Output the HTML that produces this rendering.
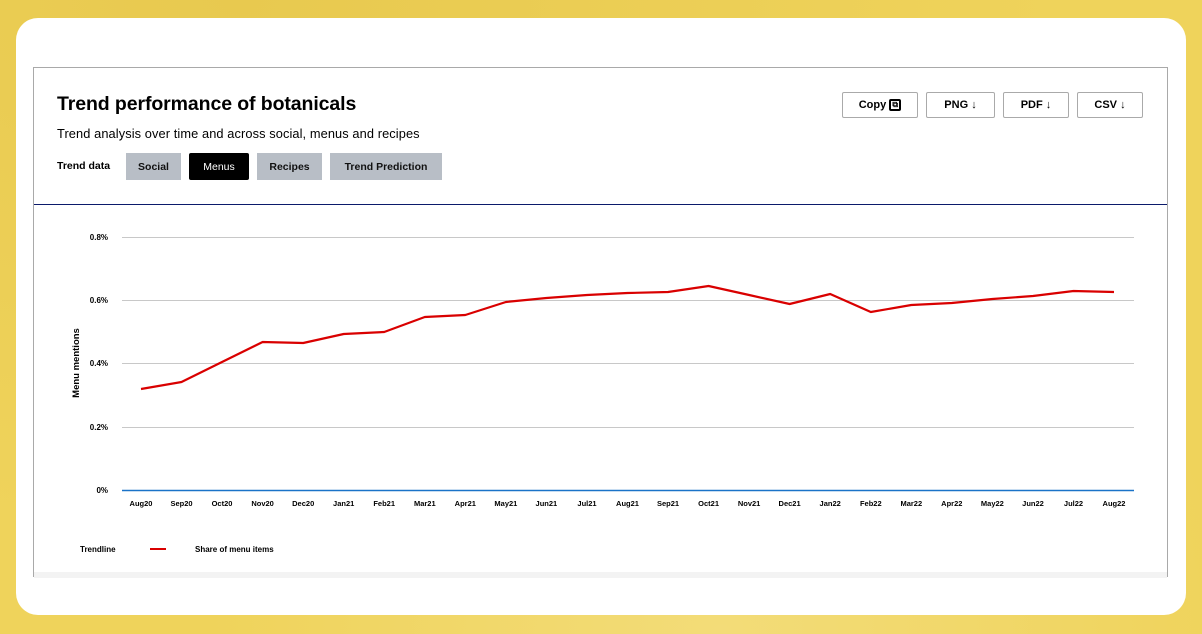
<!DOCTYPE html>
<html><head><meta charset="utf-8"><style>
*{margin:0;padding:0;box-sizing:border-box}
body{width:1202px;height:634px;overflow:hidden;background:#efd25a;font-family:"Liberation Sans",sans-serif;position:relative}
.bg{position:absolute;inset:0;background:radial-gradient(ellipse at 20% 0%,#e8c94f,transparent 60%),radial-gradient(ellipse at 60% 100%,#f3dc78,transparent 50%),#efd35b}
.card{position:absolute;left:16px;top:18px;width:1170px;height:597px;background:#fff;border-radius:22px}
.panel{position:absolute;left:33px;top:67px;width:1135px;height:510px;border:1px solid #a9a9a9;border-bottom:none;background:#fff}
.foot{position:absolute;left:34px;top:572px;width:1133px;height:6px;background:#f3f3f3}
h1{position:absolute;left:57px;top:93px;font-size:19.5px;font-weight:bold;color:#000;letter-spacing:-0.1px}
.sub{position:absolute;left:57px;top:126px;font-size:12.8px;color:#000;letter-spacing:0.1px}
.td{position:absolute;left:57px;top:160px;font-size:10.5px;font-weight:bold}
.tab{position:absolute;top:153px;height:27px;background:#b8bec6;font-size:10.5px;font-weight:bold;display:flex;align-items:center;justify-content:center;color:#111}
.btn{position:absolute;top:92px;height:26px;border:1px solid #aaa;border-radius:2px;font-size:11px;font-weight:bold;display:flex;align-items:center;justify-content:center;background:#fff}
.line{position:absolute;left:34px;top:204px;width:1133px;height:1px;background:#0b1a6b}
</style></head><body>
<div class="bg"></div>
<div class="card"></div>
<div class="panel"></div>
<div class="foot"></div>
<h1>Trend performance of botanicals</h1>
<div class="sub">Trend analysis over time and across social, menus and recipes</div>
<div class="td">Trend data</div>
<div class="tab" style="left:126px;width:55px">Social</div>
<div class="tab" style="left:189px;width:60px;background:#000;color:#fff;font-weight:normal;border-radius:2px">Menus</div>
<div class="tab" style="left:257px;width:65px">Recipes</div>
<div class="tab" style="left:330px;width:112px">Trend Prediction</div>
<div class="btn" style="left:842px;width:76px">Copy&nbsp;<span style="display:inline-block;width:12px;height:12px;border:2px solid #000;border-radius:2px;font-size:8px;line-height:8px;text-align:center">⧉</span></div>
<div class="btn" style="left:926px;width:69px">PNG&nbsp;↓</div>
<div class="btn" style="left:1003px;width:66px">PDF&nbsp;↓</div>
<div class="btn" style="left:1077px;width:66px">CSV&nbsp;↓</div>
<div class="line"></div>
<svg style="position:absolute;left:0;top:0" width="1202" height="634" font-family="Liberation Sans,sans-serif" font-weight="bold" font-size="8">
<g stroke="#c8c8c8" stroke-width="1">
<line x1="122" y1="237.5" x2="1134" y2="237.5"/><line x1="122" y1="300.5" x2="1134" y2="300.5"/><line x1="122" y1="363.5" x2="1134" y2="363.5"/><line x1="122" y1="427.5" x2="1134" y2="427.5"/>
</g>
<line x1="122" y1="490.5" x2="1134" y2="490.5" stroke="#1a73c8" stroke-width="1.5"/>
<g text-anchor="end"><text x="108" y="240">0.8%</text><text x="108" y="303">0.6%</text><text x="108" y="366">0.4%</text><text x="108" y="430">0.2%</text><text x="108" y="493">0%</text></g>
<text transform="translate(79,363) rotate(-90)" text-anchor="middle" font-size="9.5">Menu mentions</text>
<g text-anchor="middle" font-size="7.5">
<text x="141" y="506">Aug20</text><text x="181.5" y="506">Sep20</text><text x="222" y="506">Oct20</text><text x="262.6" y="506">Nov20</text><text x="303.2" y="506">Dec20</text><text x="343.7" y="506">Jan21</text><text x="384.2" y="506">Feb21</text><text x="424.8" y="506">Mar21</text><text x="465.3" y="506">Apr21</text><text x="505.9" y="506">May21</text><text x="546.4" y="506">Jun21</text><text x="587" y="506">Jul21</text><text x="627.5" y="506">Aug21</text><text x="668" y="506">Sep21</text><text x="708.6" y="506">Oct21</text><text x="749.1" y="506">Nov21</text><text x="789.6" y="506">Dec21</text><text x="830.2" y="506">Jan22</text><text x="870.8" y="506">Feb22</text><text x="911.3" y="506">Mar22</text><text x="951.8" y="506">Apr22</text><text x="992.4" y="506">May22</text><text x="1033" y="506">Jun22</text><text x="1073.5" y="506">Jul22</text><text x="1114" y="506">Aug22</text>
</g>
<polyline fill="none" stroke="#d90000" stroke-width="2.2" stroke-linejoin="round" points="141,389 181.5,382 222,362 262.6,342 303.2,343 343.7,334 384.2,332 424.8,317 465.3,315 505.9,302 546.4,298 587,295 627.5,293 668,292 708.6,286 749.1,295 789.6,304 830.2,294 870.8,312 911.3,305 951.8,303 992.4,299 1033,296 1073.5,291 1114,292"/>
<text x="80" y="552">Trendline</text>
<line x1="150" y1="549" x2="166" y2="549" stroke="#d90000" stroke-width="2"/>
<text x="195" y="552">Share of menu items</text>
</svg>
</body></html>
